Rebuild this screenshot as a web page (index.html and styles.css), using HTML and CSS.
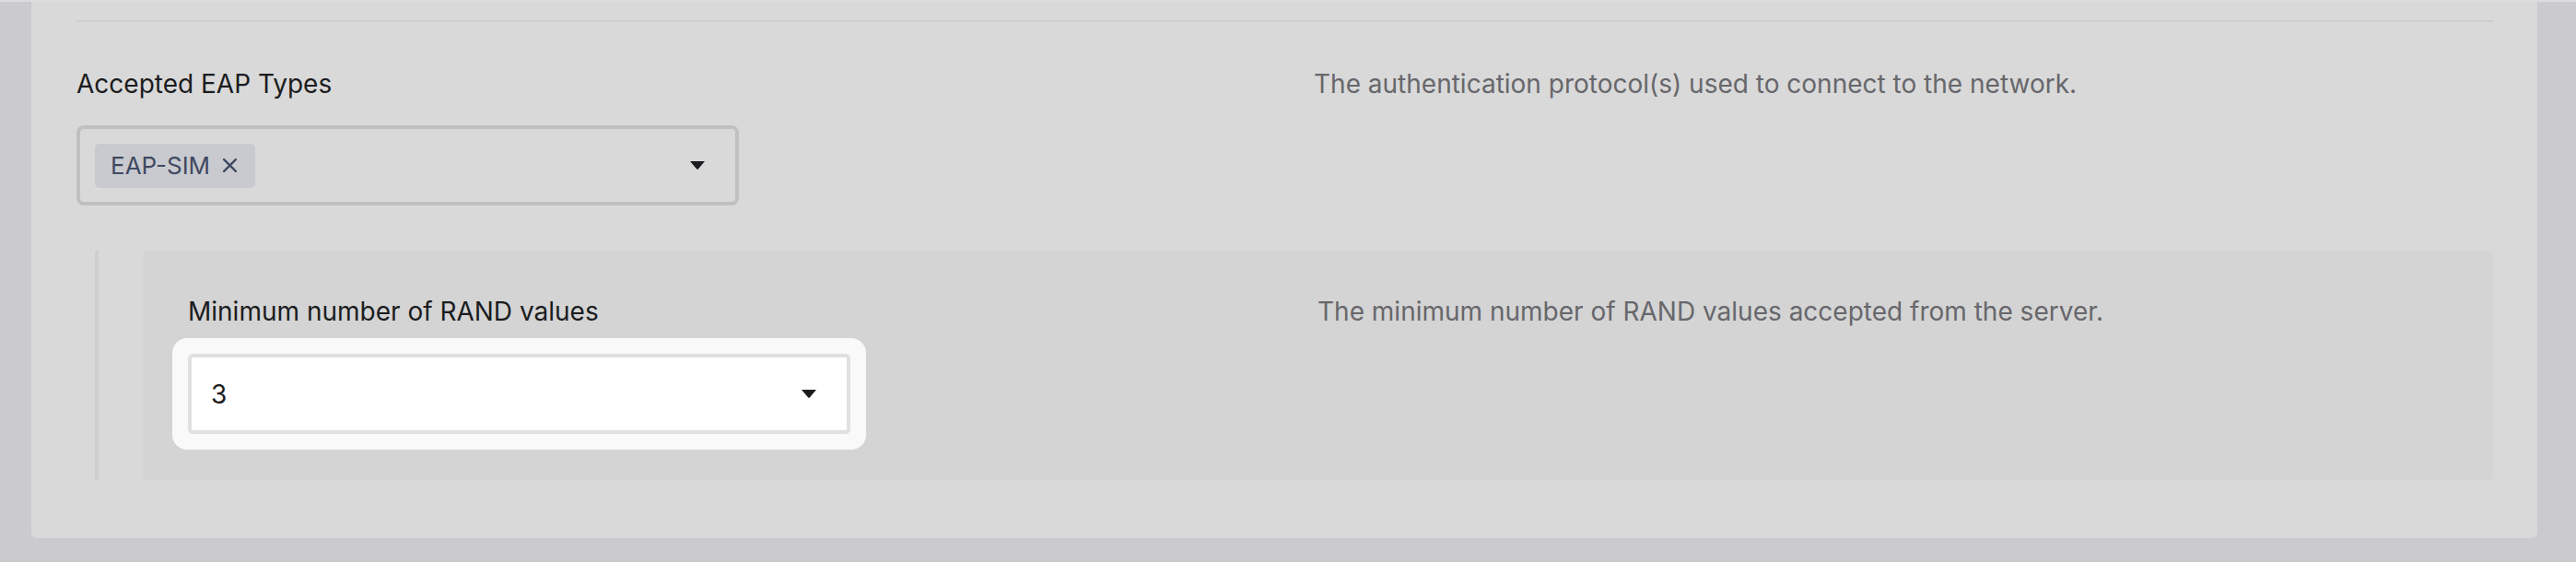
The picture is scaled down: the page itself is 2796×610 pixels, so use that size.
FILE: index.html
```html
<!DOCTYPE html>
<html lang="en">
<head>
  <meta charset="UTF-8">
  <title>EAP settings</title>
  <link rel="stylesheet" href="styles.css">
</head>
<body>
  <div class="settings-card">
    <hr class="divider">

    <div class="field-row">
      <div class="field-main">
        <label class="field-label">Accepted EAP Types</label>
        <div class="select-box">
          <span class="chip">EAP-SIM
            <svg class="chip-x" viewBox="0 0 16 16" width="17" height="17">
              <path d="M2 2 L14 14 M14 2 L2 14" stroke="currentColor" stroke-width="2.2" stroke-linecap="round"/>
            </svg>
          </span>
          <svg class="caret" viewBox="0 0 16 9" width="16" height="9">
            <path d="M0 0 H16 L8.8 8.4 Q8 9.2 7.2 8.4 Z" fill="currentColor"/>
          </svg>
        </div>
      </div>
      <p class="field-help">The authentication protocol(s) used to connect to the network.</p>
    </div>

    <div class="sub-section">
      <div class="sub-box">
        <div class="field-row sub-row">
          <div class="field-main">
            <label class="field-label">Minimum number of RAND values</label>
            <div class="select-box focused">
              <span class="select-value">3</span>
              <svg class="caret" viewBox="0 0 16 9" width="16" height="9">
                <path d="M0 0 H16 L8.8 8.4 Q8 9.2 7.2 8.4 Z" fill="currentColor"/>
              </svg>
            </div>
          </div>
          <p class="field-help">The minimum number of RAND values accepted from the server.</p>
        </div>
      </div>
    </div>
  </div>
</body>
</html>
```

FILE: styles.css
```css
/* page shell */
body {
  margin: 0;
  padding: 0 42px 27px 34px;
  background: #cbcbcf;
  border-top: 2px solid #dcdcdd;
  font-family: Inter, "Noto Sans", sans-serif;
}

.settings-card {
  background: #d9d9d9;
  border-radius: 0 0 6px 6px;
  padding: 20px 48px 63px 49px;
}

.divider {
  border: none;
  height: 2px;
  background: #cecece;
  margin: 0 0 50px 0;
}

/* label / control on the left, help text on the right */
.field-row {
  display: grid;
  grid-template-columns: 1343px 1fr;
}

.sub-row {
  grid-template-columns: 1226px 1fr;
}

.field-label {
  display: block;
  font-size: 28px;
  line-height: 34px;
  color: #1b1c20;
  margin-bottom: 28px;
}

.sub-row .field-label {
  margin-bottom: 29px;
}

.field-help {
  margin: 0;
  font-size: 28px;
  line-height: 34px;
  color: #67676b;
}

.select-box {
  width: 719px;
  height: 87px;
  box-sizing: border-box;
  border: 4px solid #c0c0c0;
  border-radius: 8px;
  display: flex;
  align-items: center;
  padding: 0 33px 0 16px;
  color: #1b1c20;
}

.select-box .caret {
  margin-left: auto;
}

.chip {
  display: inline-flex;
  align-items: center;
  gap: 13px;
  height: 48px;
  padding: 0 19px 0 17px;
  background: #c9cacf;
  border-radius: 5px;
  font-size: 26px;
  color: #3f4962;
}

.chip-x {
  display: block;
}

/* nested option block */
.sub-section {
  margin-top: 49px;
  margin-left: 20px;
  padding-left: 48px;
  border-left: 4px solid #cfcfcf;
}

.sub-box {
  background: #d4d4d4;
  border-radius: 5px;
  padding: 49px 49px 50px 49px;
}

.select-box.focused {
  background: #ffffff;
  border-color: #e0e0e0;
  border-radius: 5px;
  padding-left: 21px;
  box-shadow: 0 0 0 17px #f9f9f9;
}

.select-value {
  font-size: 28px;
  color: #1b1c20;
}
```
